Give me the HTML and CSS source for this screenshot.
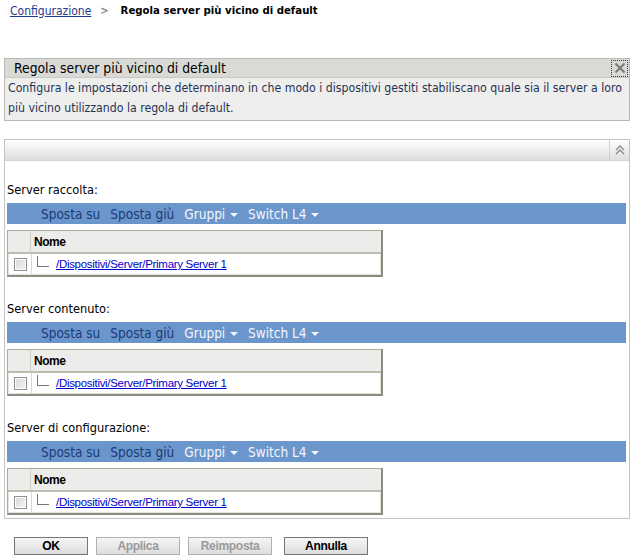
FILE: index.html
```html
<!DOCTYPE html>
<html lang="it">
<head>
<meta charset="utf-8">
<title>Regola server più vicino di default</title>
<link rel="stylesheet" href="styles.css">
</head>
<body>
<div class="crumbs">
  <a class="crumb-link" href="#">Configurazione</a>
  <span class="crumb-sep">&gt;</span>
  <span class="crumb-cur">Regola server più vicino di default</span>
</div>

<div class="info">
  <div class="info-head">
    <span class="info-title">Regola server più vicino di default</span>
    <span class="info-close">
      <svg width="14" height="14" viewBox="0 0 14 14"><path d="M2.5 2.5 L11.5 11.5 M11.5 2.5 L2.5 11.5" stroke="#7a7a7a" stroke-width="2" fill="none"/></svg>
    </span>
  </div>
  <div class="info-desc">Configura le impostazioni che determinano in che modo i dispositivi gestiti stabiliscano quale sia il server a loro più vicino utilizzando la regola di default.</div>
</div>

<div class="panel">
  <div class="panel-head">
    <span class="panel-fill"></span>
    <span class="panel-toggle">
      <svg width="12" height="12" viewBox="0 0 12 12"><path d="M2 6 L6 2 L10 6 M2 10 L6 6 L10 10" stroke="#8a8a8a" stroke-width="1.4" fill="none"/></svg>
    </span>
  </div>
  <div class="panel-body">
    <section class="group">
      <div class="group-label">Server raccolta:</div>
      <div class="toolbar">
        <span class="tb-item tb-dark">Sposta su</span>
        <span class="tb-item tb-dark">Sposta giù</span>
        <span class="tb-item tb-light">Gruppi <i class="caret"></i></span>
        <span class="tb-item tb-light">Switch L4 <i class="caret"></i></span>
      </div>
      <div class="grid">
        <div class="grid-head"><span class="cell-check"></span><span class="cell-name">Nome</span></div>
        <div class="grid-row"><span class="cell-check"><span class="checkbox"></span></span><span class="cell-name"><span class="tree"></span><a class="item-link" href="#">/Dispositivi/Server/Primary Server 1</a></span></div>
      </div>
    </section>
    <section class="group">
      <div class="group-label">Server contenuto:</div>
      <div class="toolbar">
        <span class="tb-item tb-dark">Sposta su</span>
        <span class="tb-item tb-dark">Sposta giù</span>
        <span class="tb-item tb-light">Gruppi <i class="caret"></i></span>
        <span class="tb-item tb-light">Switch L4 <i class="caret"></i></span>
      </div>
      <div class="grid">
        <div class="grid-head"><span class="cell-check"></span><span class="cell-name">Nome</span></div>
        <div class="grid-row"><span class="cell-check"><span class="checkbox"></span></span><span class="cell-name"><span class="tree"></span><a class="item-link" href="#">/Dispositivi/Server/Primary Server 1</a></span></div>
      </div>
    </section>
    <section class="group">
      <div class="group-label">Server di configurazione:</div>
      <div class="toolbar">
        <span class="tb-item tb-dark">Sposta su</span>
        <span class="tb-item tb-dark">Sposta giù</span>
        <span class="tb-item tb-light">Gruppi <i class="caret"></i></span>
        <span class="tb-item tb-light">Switch L4 <i class="caret"></i></span>
      </div>
      <div class="grid">
        <div class="grid-head"><span class="cell-check"></span><span class="cell-name">Nome</span></div>
        <div class="grid-row"><span class="cell-check"><span class="checkbox"></span></span><span class="cell-name"><span class="tree"></span><a class="item-link" href="#">/Dispositivi/Server/Primary Server 1</a></span></div>
      </div>
    </section>
  </div>
</div>

<div class="actions">
  <button class="btn btn-ok">OK</button>
  <button class="btn btn-dis">Applica</button>
  <button class="btn btn-dis">Reimposta</button>
  <button class="btn btn-cancel">Annulla</button>
</div>
</body>
</html>
```
FILE: styles.css
```css
* { box-sizing: border-box; }
body {
  margin: 0;
  background: #fff;
  font-family: "DejaVu Sans Condensed", "DejaVu Sans", sans-serif;
  color: #000;
}
.crumbs {
  height: 20px;
  padding: 1px 0 0 10px;
  font-size: 12px;
  display: flex;
  align-items: center;
}
.crumb-link { color: #1f3a8c; text-decoration: underline; }
.crumb-sep { color: #888; font-weight: bold; font-size: 11px; margin: 0 12px 0 9px; }
.crumb-cur { font-weight: bold; font-size: 11.3px; }

.info {
  margin: 38px 7px 0 4px;
  border: 1px solid #b9b9b9;
}
.info-head {
  height: 19px;
  background: #d9dad6;
  border-bottom: 1px solid #c8c8c4;
  display: flex;
  align-items: center;
  justify-content: space-between;
  padding-left: 9px;
}
.info-title { font-size: 13.8px; }
.info-close {
  width: 17px;
  height: 17px;
  border: 1px dotted #1c3c9c;
  display: flex;
  align-items: center;
  justify-content: center;
  margin-right: 1px;
}
.info-desc {
  background: #eeeeec;
  font-size: 12.2px;
  line-height: 20px;
  padding: 0 4px 2px 3px;
  color: #1f3358;
}

.panel {
  margin: 18px 7px 0 4px;
  border: 1px solid #c3c3c3;
}
.panel-head {
  height: 21px;
  display: flex;
  background: linear-gradient(#ffffff, #dedede);
  border-bottom: 1px solid #d4d4d4;
}
.panel-fill { flex: 1; }
.panel-toggle {
  width: 20px;
  border-left: 1px solid #cfcfcf;
  display: flex;
  align-items: center;
  justify-content: center;
}
.panel-body { padding: 22px 3px 3px 2px; }
.group + .group { margin-top: 25px; }
.group-label {
  font-size: 12.7px;
  height: 14px;
  line-height: 14px;
  margin-bottom: 6px;
}
.toolbar {
  height: 21px;
  background: #6a96cc;
  display: flex;
  align-items: center;
  padding-left: 34px;
  font-size: 13.5px;
  gap: 10px;
}
.tb-dark { color: #1c3a78; }
.tb-light { color: #f2f5fb; }
.caret {
  display: inline-block;
  width: 0;
  height: 0;
  border-left: 4px solid transparent;
  border-right: 4px solid transparent;
  border-top: 4px solid #f2f5fb;
  vertical-align: middle;
  margin-left: 1px;
}
.grid {
  margin-top: 6px;
  width: 376px;
  border: 1px solid #a9a99c;
  border-right: 2px solid #8b8b80;
  border-bottom: 2px solid #8b8b80;
  font-family: "Liberation Sans", Arial, sans-serif;
}
.grid-head {
  display: flex;
  height: 23px;
  background: #ececea;
  border-bottom: 2px solid #bcbcb0;
}
.grid-head .cell-check { border-right: 1px solid #d0d0c8; }
.grid-head .cell-name { font-weight: bold; font-size: 12px; letter-spacing: -0.5px; padding-left: 3px; }
.cell-check {
  width: 23px;
  display: flex;
  align-items: center;
  justify-content: center;
}
.cell-name { flex: 1; display: flex; align-items: center; }
.grid-row {
  display: flex;
  height: 21px;
  background: #fff;
  border: 1px solid #e4e4de;
  border-top: none;
}
.grid-row .cell-check { border-right: 1px solid #d8d8d0; }
.checkbox {
  width: 13px;
  height: 13px;
  border: 1px solid #8f8f8f;
  background: linear-gradient(135deg, #d9d9d9, #f4f4f4);
  box-shadow: inset 0 0 0 1px #fff;
}
.tree {
  width: 12px;
  height: 11px;
  align-self: flex-start;
  margin: 2px 7px 0 5px;
  border-left: 1px solid #777;
  border-bottom: 1px solid #777;
}
.item-link { color: #0000cc; font-size: 11.5px; letter-spacing: -0.3px; }

.actions {
  display: flex;
  gap: 8px;
  padding: 18px 0 0 14px;
}
.btn {
  height: 18px;
  border: 1px solid #767676;
  background: linear-gradient(#f6f6f6, #dcdcdc);
  font-family: "Liberation Sans", Arial, sans-serif;
  font-weight: bold;
  font-size: 12px;
  letter-spacing: -0.3px;
  padding: 0;
  color: #000;
}
.btn-ok { width: 74px; }
.btn-dis { width: 84px; color: #9a9a9a; border-color: #b0b0b0; }
.btn-cancel { width: 84px; margin-left: 4px; }
```
